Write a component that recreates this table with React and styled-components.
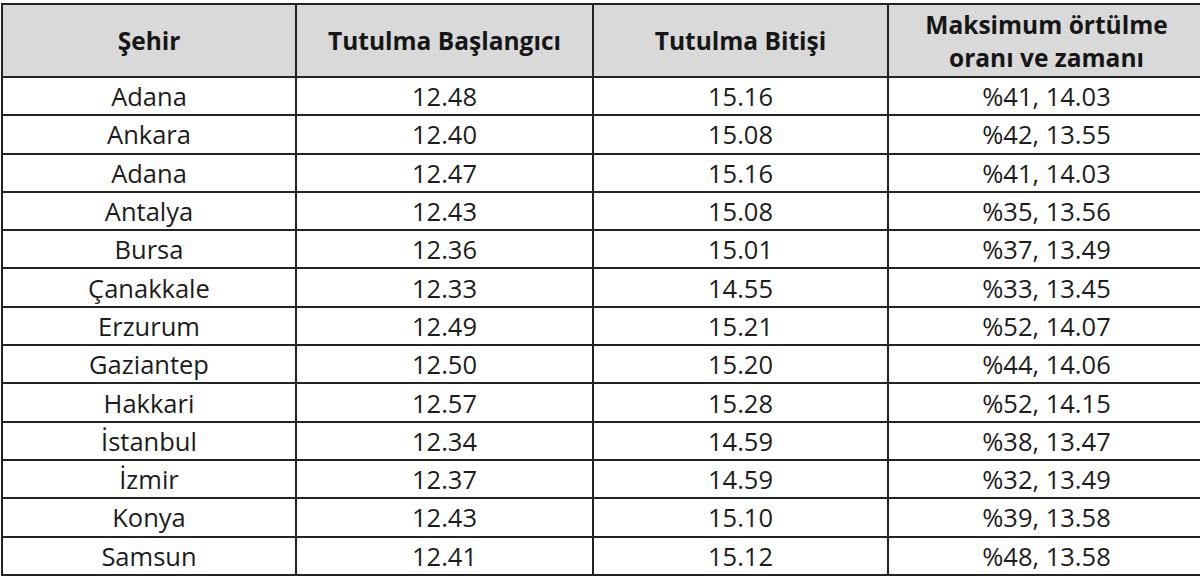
import React from 'react';
import styled, { createGlobalStyle } from 'styled-components';

const GlobalStyle = createGlobalStyle`
  html, body {
    margin: 0;
    padding: 0;
    background: #ffffff;
  }
  body {
    font-family: "Open Sans", Lato, "Liberation Sans", sans-serif;
    color: #1c1c1c;
  }
`;

const Page = styled.div`
  padding: 3px 0 0 1px;
`;

const Table = styled.table`
  width: 1195px;
  border-collapse: collapse;
  table-layout: fixed;
  border: 2px solid #222;
`;

const HeadCell = styled.th`
  width: ${(p) => p.$w}px;
  height: 71px;
  padding: 0;
  background: #d9d9d9;
  border: 2px solid #222;
  font-size: 24.5px;
  font-weight: 700;
  line-height: 33px;
  text-align: center;
  vertical-align: middle;
  color: #161616;
`;

const Row = styled.tr`
  height: 38.3px;
`;

const Cell = styled.td`
  padding: 0;
  border: 2px solid #222;
  font-size: 25.5px;
  line-height: 34px;
  text-align: center;
  vertical-align: middle;
`;

const columns = [
  { label: 'Şehir', w: 292 },
  { label: 'Tutulma Başlangıcı', w: 295 },
  { label: 'Tutulma Bitişi', w: 293 },
  { label: ['Maksimum örtülme', 'oranı ve zamanı'], w: 315 },
];

const rows = [
  ['Adana', '12.48', '15.16', '%41, 14.03'],
  ['Ankara', '12.40', '15.08', '%42, 13.55'],
  ['Adana', '12.47', '15.16', '%41, 14.03'],
  ['Antalya', '12.43', '15.08', '%35, 13.56'],
  ['Bursa', '12.36', '15.01', '%37, 13.49'],
  ['Çanakkale', '12.33', '14.55', '%33, 13.45'],
  ['Erzurum', '12.49', '15.21', '%52, 14.07'],
  ['Gaziantep', '12.50', '15.20', '%44, 14.06'],
  ['Hakkari', '12.57', '15.28', '%52, 14.15'],
  ['İstanbul', '12.34', '14.59', '%38, 13.47'],
  ['İzmir', '12.37', '14.59', '%32, 13.49'],
  ['Konya', '12.43', '15.10', '%39, 13.58'],
  ['Samsun', '12.41', '15.12', '%48, 13.58'],
];

export default function App() {
  return (
    <>
      <GlobalStyle />
      <Page>
        <Table>
          <thead>
            <tr>
              {columns.map((c, i) => (
                <HeadCell key={i} $w={c.w}>
                  {Array.isArray(c.label)
                    ? c.label.map((l, j) => <div key={j}>{l}</div>)
                    : c.label}
                </HeadCell>
              ))}
            </tr>
          </thead>
          <tbody>
            {rows.map((r, i) => (
              <Row key={i}>
                {r.map((v, j) => (
                  <Cell key={j}>{v}</Cell>
                ))}
              </Row>
            ))}
          </tbody>
        </Table>
      </Page>
    </>
  );
}
